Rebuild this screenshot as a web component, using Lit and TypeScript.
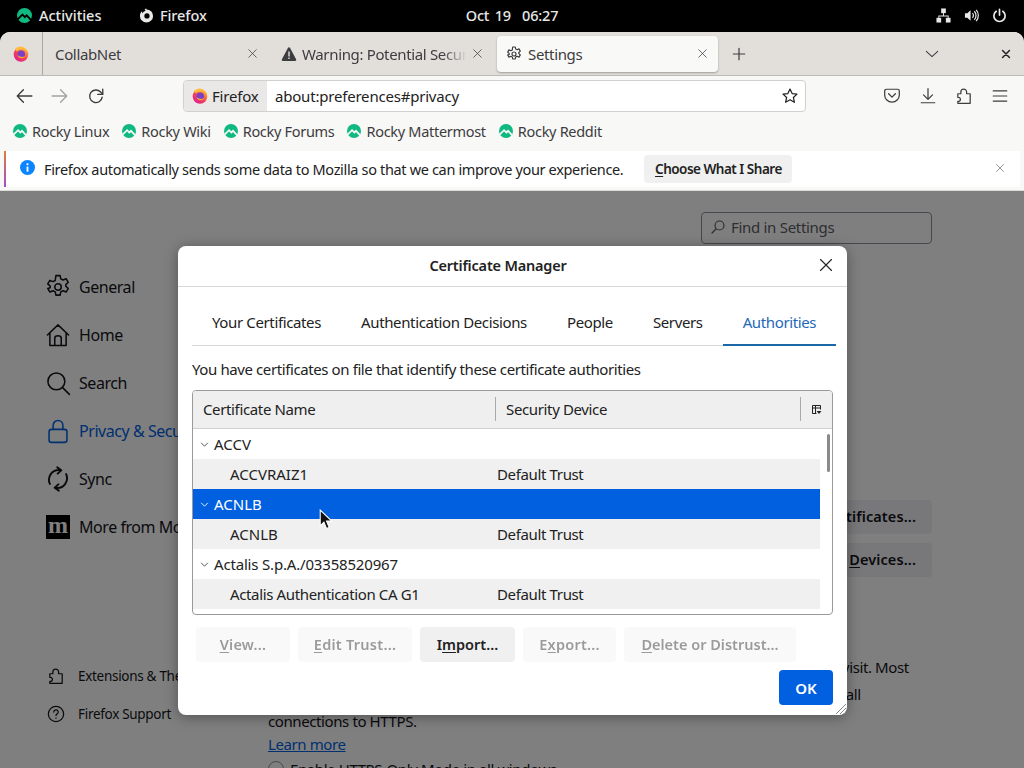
import { LitElement, html, css, svg } from "lit";
import { customElement } from "lit/decorators.js";

const ic = (size: number, body: unknown, sw = 1.3, color = "currentColor") => html`<svg class="ic" width=${size} height=${size} viewBox="0 0 16 16" fill="none" stroke=${color} stroke-width=${sw} stroke-linecap="round" stroke-linejoin="round">${body}</svg>`;

const rocky = (size: number, gap = "#f8f8f6") => html`<svg class="ic" width=${size} height=${size} viewBox="0 0 16 16"><circle cx="8" cy="8" r="8" fill="#10b981"/><path d="M.6 12.200L5.800 7l2.600 2.700 1.900-1.900 4.800 5.200" fill="none" stroke=${gap} stroke-width="2"/></svg>`;

const firefox = (size: number) => html`<svg class="ic" width=${size} height=${size} viewBox="0 0 16 16"><defs><linearGradient id="ff" x1="0.8" y1="0.1" x2="0.2" y2="0.9"><stop offset="0" stop-color="#ffb52e"/><stop offset="0.5" stop-color="#f5484f"/><stop offset="1" stop-color="#e0218a"/></linearGradient></defs><circle cx="8" cy="8.500" r="7.300" fill="url(#ff)"/><path fill="#ffbd3f" d="M2 3c2-2.500 6-3.200 9-1.500 2 1.200 3.500 3 4 5-1.500-2-3-3-5-3.200C7 3.300 5 4 4 5.500 3.300 4.500 2.500 3.800 2 3z"/><circle cx="8.300" cy="8.300" r="3.700" fill="#7a3fc8"/><path fill="#f6a13a" d="M4.500 9c.5 2.500 3 4 5.500 3 1.500-.6 2.500-1.700 3-3-1 1.500-3 2.300-5 1.800C6.500 10.500 5.300 9.800 4.500 9z"/></svg>`;

const close = (size = 12, sw = 1.1) => ic(size, svg`<path d="M2.500 2.500l11 11M13.500 2.500l-11 11"/>`, sw);
const chev = (size = 10, color = "currentColor") => ic(size, svg`<path d="M2.500 5.500L8 11l5.500-5.500"/>`, 1.6, color);

const gear = (size: number, sw = 1.3) => ic(size, svg`<path d="M6.700 1h2.600l.4 2 1.400.7 1.900-.8 1.300 2.200-1.500 1.400v1l1.500 1.400-1.300 2.200-1.900-.8-1.400.7-.4 2H6.700l-.4-2-1.400-.7-1.900.8-1.300-2.200L3.200 8.500v-1L1.700 6.100 3 3.900l1.900.8 1.400-.7z"/><circle cx="8" cy="8" r="2"/>`, sw);
const puzzle = (size: number, sw = 1.3) => ic(size, svg`<path d="M13.500 6h-3.200V4.500C10.300 3 9.200 1.800 7.700 1.800S5.200 3 5.200 4.500V6H2.500v3.200c1.300-.2 2.300.7 2.300 1.800s-1 2-2.300 1.800v1.700h11z"/>`, sw);

@customElement("app-root")
export class AppRoot extends LitElement {
  static styles = css`
    :host { display: block; width: 1024px; height: 768px; overflow: hidden; background: #000; position: relative;
      font-family: "Noto Sans", sans-serif; font-size: 15px; color: #15141a; }
    * { box-sizing: border-box; }
    .ic { display: block; flex: none; }
    u { text-underline-offset: 2px; }

    .topbar { height: 32px; padding-bottom: 2px; display: grid; grid-template-columns: 1fr auto 1fr; align-items: center; background: #000; color: #e8e8e6; font-weight: 500; font-size: 14.500px; }
    .tb-left { display: flex; align-items: center; padding-left: 17px; }
    .tb-left .act { margin-left: 7px; width: 62px; }
    .tb-left .app { margin-left: 38px; display: flex; align-items: center; gap: 6px; letter-spacing: -.1px; }
    .clock { word-spacing: 2px; letter-spacing: -.2px; }
    .tb-right { display: flex; justify-content: flex-end; align-items: center; gap: 13px; padding-right: 17px; color: #e8e8e6; }

    .window { height: 736px; border-radius: 10px 10px 0 0; overflow: hidden; background: #f8f8f6; display: flex; flex-direction: column; }
    .tabstrip { height: 44px; background: #e2dfdb; border-bottom: 1px solid #bdbbb8; display: flex; align-items: center; flex: none; color: #3d3c40; letter-spacing: -.35px; }
    .ffview { width: 43px; height: 43px; border-right: 1px solid #aaa8a5; display: flex; align-items: center; justify-content: center; flex: none; }
    .tab { height: 36px; display: flex; align-items: center; flex: none; border-radius: 4px; }
    .tab1 { width: 223px; padding: 0 8px 0 12px; }
    .tab2 { width: 230px; padding: 0 14px 0 14px; gap: 5px; margin-left: 1px; }
    .tab3 { width: 221px; padding: 0 10px 0 9px; gap: 6px; background: #f9f9f7; box-shadow: 0 1px 2px rgba(0,0,0,.3); }
    .tab .t { flex: 1; white-space: nowrap; overflow: hidden; min-width: 0; }
    .tab2 .t { -webkit-mask-image: linear-gradient(90deg, #000 85%, transparent); mask-image: linear-gradient(90deg, #000 85%, transparent); }
    .plus { margin-left: 14px; }
    .strip-chev { margin-left: 179px; }
    .strip-x { margin-left: 62px; color: #222; }

    .navbar { height: 41px; padding: 0 0 2px 15px; display: flex; align-items: center; flex: none; color: #3d3c40; gap: 18px; }
    .dim { opacity: .45; }
    .urlbar { margin-left: 60px; width: 623px; height: 32px; background: #fff; border: 1px solid #d0d0cd; border-radius: 4px; display: flex; align-items: center; padding-right: 6px; color: #222; letter-spacing: -.2px; }
    .chip { width: 83px; height: 30px; background: #e9e8e6; border-radius: 4px 0 0 4px; display: flex; align-items: center; padding-left: 8px; gap: 4px; }
    .url { flex: 1; margin-left: 8px; }
    .nav-right { margin-left: 59px; display: flex; gap: 18px; align-items: center; }

    .bookmarks { height: 28px; display: flex; align-items: center; padding-left: 13px; gap: 13px; flex: none; color: #3d3c40; font-size: 14.500px; letter-spacing: -.3px; }
    .bm { display: flex; align-items: center; gap: 5px; }

    .infobar { height: 36px; margin: 6px 4px 3px 4px; background: #fff; display: flex; align-items: center; flex: none; border-left: 2px solid; border-image: linear-gradient(#e0812f, #a24bd0) 1; color: #222; }
    .infobar .i { margin: -4px 0 0 14px; }
    .infobar .msg { margin-left: 9px; font-size: 14.500px; letter-spacing: -.34px; }
    .infobar button { margin-left: 21px; height: 28px; width: 148px; border: 0; border-radius: 4px; background: #f0f0f0; font: 600 13.500px "Noto Sans", sans-serif; letter-spacing: -.5px; white-space: nowrap; color: #222; padding: 0; }
    .infobar .x { margin-left: auto; margin-right: 15px; margin-top: -3px; color: #555; }

    .content { flex: 1; min-height: 0; position: relative; background: #fff; border-top: 1px solid #ddd; display: flex; overflow: hidden; }
    .side { width: 268px; flex: none; padding: 72px 0 0 45px; display: flex; flex-direction: column; font-size: 16px; letter-spacing: -.45px; white-space: nowrap; }
    .side .it { height: 48px; display: flex; align-items: center; gap: 8px; }
    .side .blue { color: #0060df; }
    .side .ft { height: 38px; display: flex; align-items: center; gap: 13px; font-size: 13.500px; letter-spacing: -.3px; padding-left: 2px; }
    .side .ft.first { margin-top: 106px; }
    .moz { width: 24px; height: 24px; margin: 0 1px; background: #000; color: #fff; font: 700 24px/24px "Liberation Serif", serif; letter-spacing: 0; display: flex; align-items: center; justify-content: center; flex: none; padding-bottom: 4px; }

    .main { flex: 1; min-width: 0; padding-top: 21px; display: flex; flex-direction: column; align-items: flex-end; padding-right: 92px; letter-spacing: -.4px; }
    .find { width: 231px; height: 32px; padding-bottom: 2px; border: 1px solid #8f8f9d; border-radius: 4px; background: #fff; display: flex; align-items: center; gap: 5px; padding-left: 8px; color: #5b5b66; flex: none; letter-spacing: -.3px; }
    .gbtn { height: 34px; display: flex; align-items: center; justify-content: flex-end; padding: 0 16px 2px 0; background: #f0f0f4; border-radius: 4px; font-weight: 600; font-size: 14.500px; letter-spacing: .1px; width: 300px; flex: none; }
    .gbtn.a { margin-top: 256px; }
    .gbtn.b { margin-top: 9px; }
    .para { align-self: flex-start; margin-top: 77px; line-height: 27px; width: 664px; flex: none; white-space: nowrap; }
    .para a { color: #0060df; text-decoration: underline; display: block; line-height: 20px; margin-top: -1px; }
    .radio { align-self: flex-start; display: flex; align-items: center; gap: 6px; margin-top: 5px; white-space: nowrap; flex: none; }
    .radio i { width: 16px; height: 16px; border: 1px solid #8f8f9d; border-radius: 50%; display: block; }

    .scrim { position: absolute; inset: 0; background: rgba(0,0,0,.5); }

    .dialog { position: absolute; left: 178px; top: 246px; width: 669px; height: 469px; background: #fff; border-radius: 8px; box-shadow: 0 2px 14px rgba(0,0,0,.35); display: flex; flex-direction: column; color: #222; letter-spacing: -.36px; }
    .dh { height: 41px; flex: none; padding: 0 29px 2px 0; border-bottom: 1px solid #d8d8d8; display: flex; align-items: center; justify-content: center; position: relative; font-weight: 600; font-size: 14.500px; letter-spacing: -.2px; }
    .dh .x { position: absolute; right: 13px; top: 11px; color: #222; }
    .dbody { flex: 1; min-height: 0; padding: 13px 14px 10px; display: flex; flex-direction: column; }
    .dtabs { height: 46px; display: flex; border-bottom: 1px solid #d8d8d8; flex: none; margin-right: -2px; letter-spacing: -.37px; }
    .dtab { padding: 0 20px 2px; display: flex; align-items: center; height: 46px; white-space: nowrap; }
    .dtab.on { color: #2468b8; border-bottom: 2px solid #1c67a8; padding-bottom: 0; }
    .desc { margin-top: 13px; line-height: 20px; flex: none; letter-spacing: -.4px; }
    .tree { margin-top: 11px; height: 225px; flex: none; border: 1px solid #9a9a9a; border-radius: 4px; display: flex; flex-direction: column; overflow: hidden; }
    .thead { height: 38px; padding-bottom: 1px; flex: none; background: #efefef; border-bottom: 1px solid #d0d0d0; display: grid; grid-template-columns: 302px 305px 1fr; align-items: center; }
    .th { padding-left: 10px; height: 24px; display: flex; align-items: center; }
    .th + .th { border-left: 1px solid #aaa; }
    .tbody { flex: 1; min-height: 0; display: flex; }
    .rows { width: 627px; flex: none; }
    .row { height: 30px; display: grid; grid-template-columns: 304px 1fr; align-items: center; }
    .row.child { background: #f0f0f0; }
    .row.sel { background: #0060df; color: #fff; }
    .row.child .n { padding-left: 37px; }
    .row .n { display: flex; align-items: center; letter-spacing: -.18px; }
    .row.child .n { letter-spacing: -.36px; }
    .row .n.caps, .row.child .n.caps { letter-spacing: 0; }
    .row .tw { width: 21px; display: flex; justify-content: center; padding-left: 2px; flex: none; color: #444; }
    .row.sel .tw { color: #fff; }
    .sb { flex: 1; padding: 5px 0 0 7px; }
    .sb i { display: block; width: 3px; height: 38px; background: #8a8a8a; border-radius: 2px; }
    .btns { margin-top: 12px; display: flex; gap: 8px; padding-left: 4px; flex: none; }
    .btn { height: 35px; border: 0; border-radius: 4px; background: #f0f0f0; font: 600 14.500px "Noto Sans", sans-serif; color: #222; padding: 0 0 2px; letter-spacing: 0; }
    .btn.off { opacity: .45; background: #f3f3f3; letter-spacing: .25px; }
    .btn.wide { letter-spacing: 0; }
    .w94 { width: 94px; } .w114 { width: 114px; } .w95 { width: 95px; } .w93 { width: 93px; } .w172 { width: 172px; }
    .ok-row { margin-top: 8px; display: flex; justify-content: flex-end; flex: none; }
    .ok { width: 54px; height: 35px; border: 0; border-radius: 4px; background: #0060df; color: #fff; font: 600 15px "Noto Sans", sans-serif; }
    .grip { position: absolute; right: 0; bottom: 0; }
    .cursor { position: absolute; left: 319px; top: 509px; }
  `;

  renderRow(name: string, trust: string, cls = "") {
    const child = trust !== "";
    const caps = name === name.toUpperCase() ? "caps" : "";
    return html`<div class="row ${child ? "child" : ""} ${cls}">
      <div class="n ${caps}">${child ? "" : html`<span class="tw">${chev(9)}</span>`}${name}</div><div>${trust}</div>
    </div>`;
  }

  render() {
    const bms = ["Rocky Linux", "Rocky Wiki", "Rocky Forums", "Rocky Mattermost", "Rocky Reddit"];
    return html`
      <div class="topbar">
        <div class="tb-left">
          ${rocky(15, "#000")}<span class="act">Activities</span>
          <span class="app">
            ${html`<svg class="ic" width="15" height="15" viewBox="0 0 16 16"><path fill="#e8e8e6" d="M8 1.500a7 7 0 1 1-7 7c0-2 .8-3.800 2-5l.5 2C4.300 4.500 5.500 3.500 7 3l-1-2c.7-.2 1.300-.3 2-.3z"/><circle cx="8.500" cy="8.500" r="2.800" fill="#000"/></svg>`}
            Firefox
          </span>
        </div>
        <div class="clock">Oct 19&nbsp; 06:27</div>
        <div class="tb-right">
          ${html`<svg class="ic" width="15" height="15" viewBox="0 0 16 16" fill="#e8e8e6"><rect x="5.500" y="0.500" width="5" height="5"/><rect x="0.500" y="10.500" width="5" height="5"/><rect x="10.500" y="10.500" width="5" height="5"/><path d="M7.500 5h1v3h5v3h-1V9H3.500v2h-1V8h5z"/></svg>`}
          ${html`<svg class="ic" width="15" height="15" viewBox="0 0 16 16" fill="none" stroke="#e8e8e6" stroke-width="1.300"><path fill="#e8e8e6" stroke="none" d="M1 5.500h2.500L7 2.500v11l-3.500-3H1z"/><path d="M9 5.500a3.500 3.500 0 0 1 0 5M11 3.500a6.500 6.500 0 0 1 0 9M13 2a9 9 0 0 1 0 12"/></svg>`}
          ${html`<svg class="ic" width="15" height="15" viewBox="0 0 16 16" fill="none" stroke="#e8e8e6" stroke-width="1.800" stroke-linecap="round"><path d="M8 1.500v6M4.500 3.500a6 6 0 1 0 7 0"/></svg>`}
        </div>
      </div>

      <div class="window">
        <div class="tabstrip">
          <div class="ffview">${firefox(16)}</div>
          <div class="tab tab1"><span class="t">CollabNet</span>${close(11)}</div>
          <div class="tab tab2">
            ${html`<svg class="ic" width="16" height="16" viewBox="0 0 16 16"><path fill="#3d3c40" d="M8 1.200c.5 0 .9.300 1.100.700l6 11.300c.4.800-.1 1.700-1 1.700H1.900c-.9 0-1.400-.9-1-1.700l6-11.300c.2-.4.600-.7 1.100-.7z"/><rect x="7.300" y="5.500" width="1.400" height="5" fill="#e2dfdb"/><rect x="7.300" y="11.500" width="1.400" height="1.500" fill="#e2dfdb"/></svg>`}
            <span class="t">Warning: Potential Security Risk Ahead</span>${close(11)}
          </div>
          <div class="tab tab3">${gear(16, 1.2)}<span class="t">Settings</span>${close(11)}</div>
          <span class="plus">${ic(14, svg`<path d="M8 1.500v13M1.500 8h13"/>`, 1.4)}</span>
          <span class="strip-chev">${ic(14, svg`<path d="M1.500 5L8 11l6.500-6"/>`, 1.2)}</span>
          <span class="strip-x">${close(10, 2.400)}</span>
        </div>

        <div class="navbar">
          ${ic(18, svg`<path d="M15 8H2M7.500 2.500L2 8l5.500 5.500"/>`, 1.200)}
          <span class="dim">${ic(18, svg`<path d="M1 8h13M8.500 2.500L14 8l-5.500 5.500"/>`, 1.200)}</span>
          ${ic(18, svg`<path d="M13.500 9a5.600 5.600 0 1 1-1.400-4.500L14 6.500"/><path d="M14 2v4.500H9.500"/>`, 1.200)}
          <div class="urlbar">
            <div class="chip">${firefox(16)}<span>Firefox</span></div>
            <span class="url">about:preferences#privacy</span>
            ${ic(18, svg`<path d="M8 1.800l1.900 4 4.300.5-3.200 3 .9 4.300L8 11.400l-3.900 2.200.9-4.300-3.200-3 4.300-.5z"/>`, 1.100)}
          </div>
          <div class="nav-right">
            ${ic(18, svg`<path d="M1.500 3.500c0-.8.600-1.500 1.400-1.500h10.200c.8 0 1.400.7 1.400 1.500V7a6.500 6.500 0 0 1-13 0z"/><path d="M5 6l3 3 3-3"/>`, 1.100)}
            ${ic(18, svg`<path d="M8 1.500v9M4 7l4 4 4-4M2 14h12"/>`, 1.100)}
            ${puzzle(18, 1.100)}
            ${ic(18, svg`<path d="M2 3.500h12M2 8h12M2 12.500h12"/>`, 1.100)}
          </div>
        </div>

        <div class="bookmarks">
          ${bms.map(b => html`<span class="bm">${rocky(14)}${b}</span>`)}
        </div>

        <div class="infobar">
          <span class="i">${html`<svg class="ic" width="15" height="15" viewBox="0 0 16 16"><circle cx="8" cy="8" r="8" fill="#0a84ff"/><rect x="7" y="7" width="2" height="5.500" fill="#fff"/><rect x="7" y="3.500" width="2" height="2" fill="#fff"/></svg>`}</span>
          <span class="msg">Firefox automatically sends some data to Mozilla so that we can improve your experience.</span>
          <button><u>C</u>hoose What I Share</button>
          <span class="x">${close(10, 1)}</span>
        </div>

        <div class="content">
          <nav class="side">
            <div class="it">${gear(26, .95)}General</div>
            <div class="it">${ic(26, svg`<path d="M1.500 8L8 1.800 14.500 8M3 6.800V14.500h10V6.800M6 14.500V10c0-.8.700-1.500 2-1.500s2 .7 2 1.500v4.500"/>`, .95)}Home</div>
            <div class="it">${ic(26, svg`<circle cx="7" cy="7" r="5.200"/><path d="M11 11l4 4"/>`, .95)}Search</div>
            <div class="it blue">${ic(26, svg`<rect x="2.500" y="7" width="11" height="8" rx="1.500"/><path d="M5 7V4.500a3 3 0 0 1 6 0V7"/>`, .95)}Privacy &amp; Security</div>
            <div class="it">${ic(26, svg`<path d="M3 11a6 6 0 0 1 6-8.500M13 5a6 6 0 0 1-6 8.500M7.500 .8L10 2.700 7.800 4.700M8.500 15.200L6 13.300l2.200-2"/>`, 1.200)}Sync</div>
            <div class="it"><span class="moz">m</span>More from Mozilla</div>
            <div class="ft first">${puzzle(18, 1.100)}Extensions &amp; Themes</div>
            <div class="ft">${ic(18, svg`<circle cx="8" cy="8" r="6.800"/><path d="M6 6.300a2 2 0 1 1 2.800 1.800c-.5.300-.8.600-.8 1.200M8 11.500v.2"/>`, 1.100)}Firefox Support</div>
          </nav>
          <div class="main">
            <div class="find">${ic(16, svg`<circle cx="9.500" cy="6.500" r="4.500"/><path d="M6 10l-4 4"/>`, 1.200)}Find in Settings</div>
            <div class="gbtn a">View Certificates...</div>
            <div class="gbtn b"><span><u>S</u>ecurity <u>D</u>evices...</span></div>
            <div class="para">
              HTTPS provides a secure, encrypted connection between Firefox and the websites you visit. Most<br />
              websites support HTTPS, and if HTTPS-Only Mode is enabled, then Firefox will upgrade all<br />
              connections to HTTPS.
              <a>Learn more</a>
            </div>
            <div class="radio"><i></i>Enable HTTPS-Only Mode in all windows</div>
          </div>
          <div class="scrim"></div>
        </div>
      </div>

      <div class="dialog">
        <div class="dh">Certificate Manager<span class="x">${close(16, 1.100)}</span></div>
        <div class="dbody">
          <div class="dtabs">
            <div class="dtab">Your Certificates</div>
            <div class="dtab">Authentication Decisions</div>
            <div class="dtab">People</div>
            <div class="dtab">Servers</div>
            <div class="dtab on">Authorities</div>
          </div>
          <div class="desc">You have certificates on file that identify these certificate authorities</div>
          <div class="tree">
            <div class="thead">
              <div class="th">Certificate Name</div>
              <div class="th">Security Device</div>
              <div class="th">${html`<svg class="ic" width="11" height="11" viewBox="0 0 11 11" fill="none" stroke="#222"><path d="M1.500 1.500h8v4M1.500 1.500v8h4M1.500 4h8M4.500 1.500v8"/><path fill="#222" stroke="none" d="M5.500 7h5l-2.500 3z"/></svg>`}</div>
            </div>
            <div class="tbody">
              <div class="rows">
                ${this.renderRow("ACCV", "")}
                ${this.renderRow("ACCVRAIZ1", "Default Trust")}
                ${this.renderRow("ACNLB", "", "sel")}
                ${this.renderRow("ACNLB", "Default Trust")}
                ${this.renderRow("Actalis S.p.A./03358520967", "")}
                ${this.renderRow("Actalis Authentication CA G1", "Default Trust")}
              </div>
              <div class="sb"><i></i></div>
            </div>
          </div>
          <div class="btns">
            <button class="btn off w94"><u>V</u>iew...</button>
            <button class="btn off w114"><u>E</u>dit Trust...</button>
            <button class="btn w95">I<u>m</u>port...</button>
            <button class="btn off w93">E<u>x</u>port...</button>
            <button class="btn off wide w172"><u>D</u>elete or Distrust...</button>
          </div>
          <div class="ok-row"><button class="ok">OK</button></div>
        </div>
        <svg class="grip" width="12" height="12" viewBox="0 0 12 12" stroke="#888"><path d="M1 11L11 1M5 11l6-6M9 11l2-2"/></svg>
      </div>

      <svg class="cursor" width="14" height="21" viewBox="0 0 13 20"><path d="M1 1v15l3.500-3.500 2.500 6 2.500-1-2.500-6H12z" fill="#111" stroke="#fff" stroke-width="1"/></svg>
    `;
  }
}
